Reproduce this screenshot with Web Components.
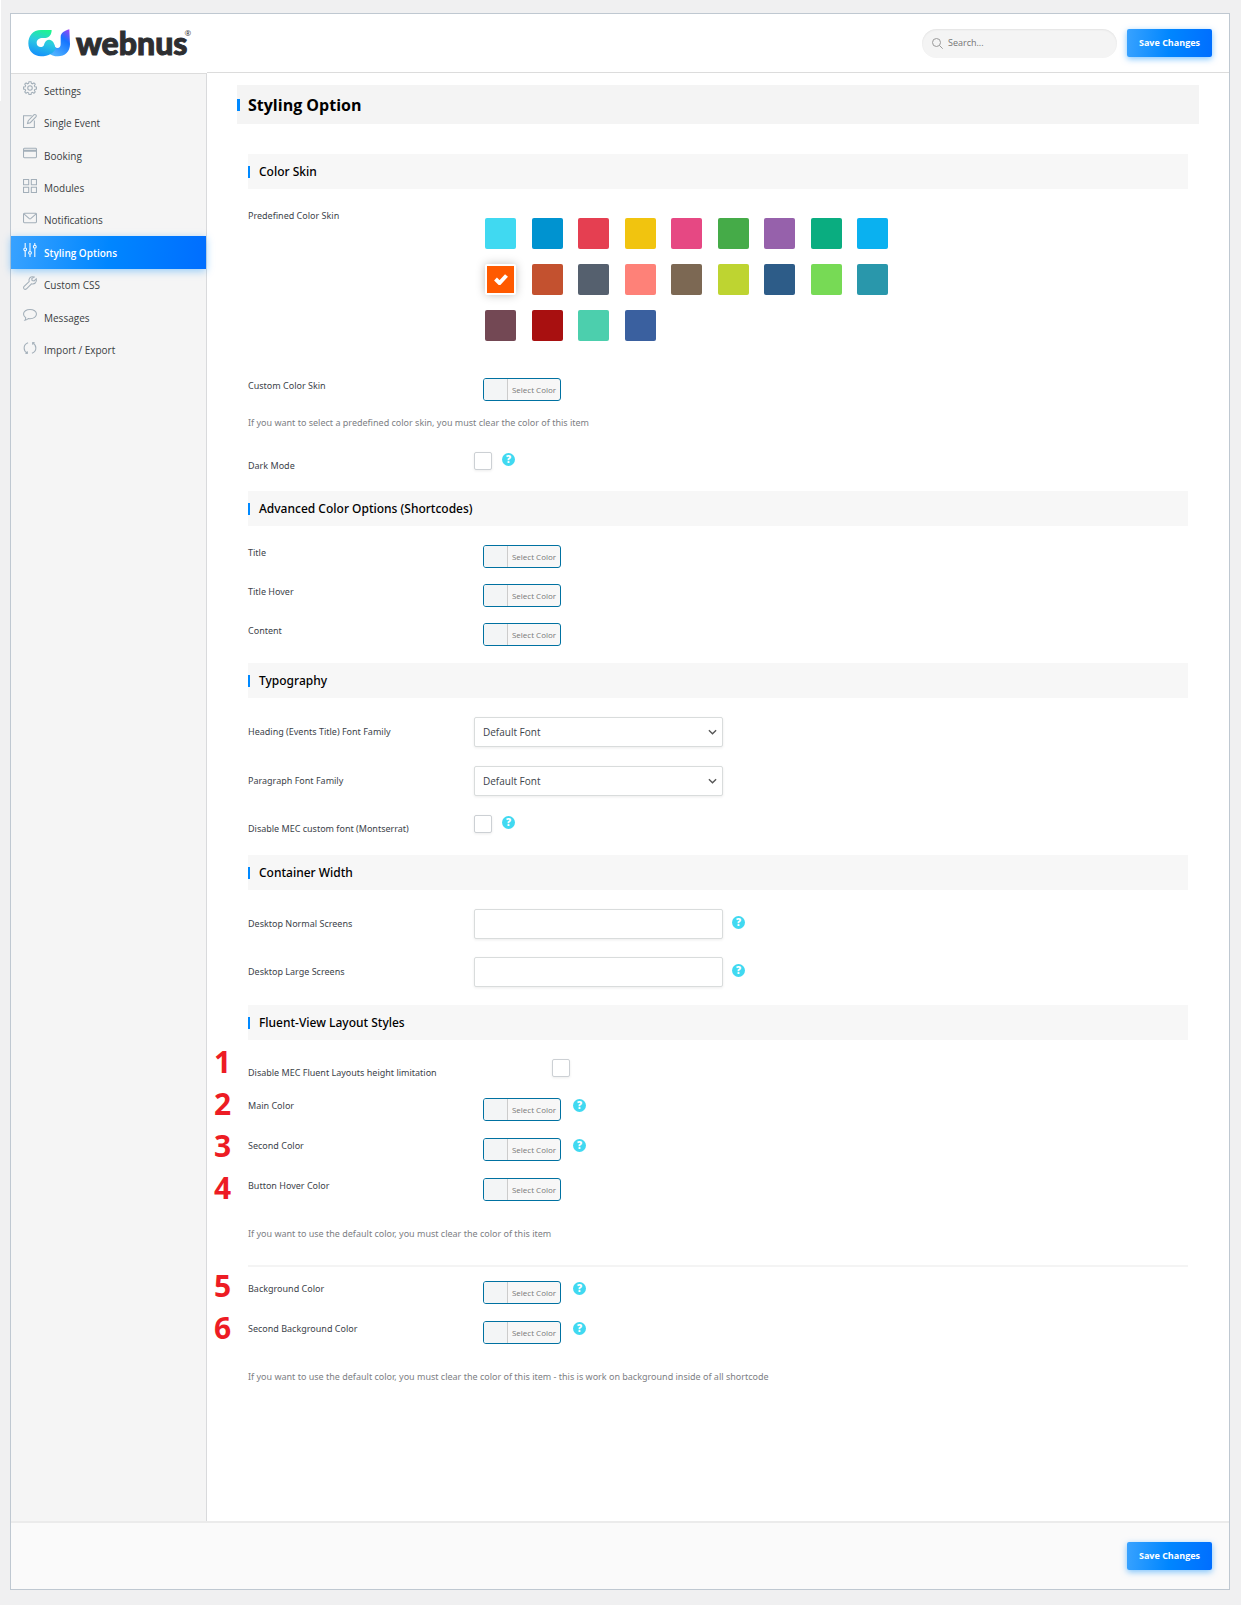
<!DOCTYPE html>
<html lang="en">
<head>
<meta charset="utf-8">
<meta name="viewport" content="width=device-width, initial-scale=1">
<title>Styling Option</title>
<style>
  body {
    margin: 0;
    color: #3c434a;
    background: #f0f0f1 linear-gradient(#fff, #fff) 0 0 / 1px 101px no-repeat;
    font-family: "Noto Sans", "Open Sans", sans-serif;
    font-size: 9px;
    line-height: 16px;
  }
</style>
</head>
<body>
<settings-page></settings-page>

<script>
const ICONS = {
  settings: `<circle cx="8" cy="8" r="2.6"/><path d="M6.8 .8h2.4l.4 1.9 1.3.5L12.500 2.100l1.500 1.500-1 1.700.5 1.200 1.900.4v2.300l-1.900.4-.5 1.300 1 1.600-1.500 1.500-1.600-1-1.300.5-.4 1.900H6.800l-.4-1.900-1.300-.5-1.600 1L2 12.500l1-1.600-.5-1.300-1.900-.4V6.900l1.900-.4.5-1.200-1-1.700 1.500-1.500 1.600 1.100 1.300-.5z"/>`,
  edit: `<path d="M10 2H.6v13.400H13V7.500"/><path d="M5.200 10.800l.8-3.200L12.700.8q1-.7 2 .3t.3 2L8.300 9.900zM5.200 10.800l2-.6"/>`,
  card: `<rect x=".6" y="2.600" width="14.800" height="10.800" rx="1"/><path d="M.6 4.800h14.800M.6 6h14.800"/>`,
  modules: `<path d="M.6.6h5.900v5.900H.6zM9.500.6h5.900v5.900H9.500zM.6 9.500h5.900v5.900H.6zM9.500 9.500h5.900v5.900H9.500z"/>`,
  mail: `<rect x=".6" y="2.600" width="14.800" height="10.800" rx="1"/><path d="M1 3.200l6.200 5.600q.8.600 1.600 0L15 3.200"/>`,
  sliders: `<path d="M2.500 0v5.500M2.500 9v7M8 0v9.500M8 13v3M13.500 0v2.500M13.500 6v10"/><circle cx="2.500" cy="7.200" r="1.600"/><circle cx="8" cy="11.200" r="1.600"/><circle cx="13.500" cy="4.200" r="1.600"/>`,
  wrench: `<path d="M12.800 1.200q-3-1.200-5 .9-1.500 1.700-.8 4.200L1 12.200q-.9 1.200.2 2.500 1.200 1.100 2.500.2l6-6q2.600.7 4.300-.9 2-2 1.200-4.800l-2.500 2.400-2.300-.5-.4-2.100z"/>`,
  bubble: `<path d="M8 1.600c4.200 0 7.400 2.300 7.400 5.300S12.200 12.200 8 12.200q-1 0-2-.2-1.400 1.800-3.800 2 1-1.200.9-2.900C1.500 10.200.6 8.600.6 6.900c0-3 3.200-5.300 7.400-5.300z"/>`,
  sync: `<path d="M5.800 2C3 3 1.300 5.300 1.300 8c0 2.400 1.300 4.500 3.400 5.800M10.200 14c2.800-1 4.500-3.300 4.500-6 0-2.400-1.300-4.500-3.400-5.800M2.800 14.200l2.300-.2-.3-2.300M13.200 1.800l-2.300.2.300 2.300"/>`
};

class WebnusLogo extends HTMLElement {
  connectedCallback() {
    this.attachShadow({ mode: "open" });
    this.shadowRoot.innerHTML = `
      <style>
        :host { display: flex; align-items: center; gap: 6px; color: #2d2e31; }
        svg { width: 42px; height: 28px; }
        .name { font: 900 32px/40px Lato, sans-serif; -webkit-text-stroke: 1px currentColor; }
        sup { font: 400 8px/8px "Open Sans", sans-serif; align-self: flex-start; margin: 6px 0 0 -9px; }
      </style>
      <svg viewBox="82 90 126 82" aria-hidden="true">
        <defs>
          <linearGradient id="loop" x1=".7" y1="0" x2=".4" y2="1">
            <stop offset="0" stop-color="#1ef78c"/><stop offset=".45" stop-color="#2ccbe0"/><stop offset="1" stop-color="#1590fb"/>
          </linearGradient>
          <linearGradient id="hook" x1="1" y1="0" x2=".4" y2="1">
            <stop offset="0" stop-color="#a63ff5"/><stop offset=".4" stop-color="#1474ff"/><stop offset="1" stop-color="#4db0ff"/>
          </linearGradient>
        </defs>
        <path fill="url(#hook)" d="M206 90C192 94 180 100 180 114v20c0 8-4 12-9 12-7 0-9-5-11-13l-16 28c7 7 16 10 28 10 21 0 36-14 36-36z"/>
        <path fill="url(#loop)" d="M153 92h-32C96 92 83 110 83 132c0 24 17 39 38 39 22 0 41-11 44-25-4-6-4-12-7-17-5-9-15-10-21-5-9 8-4 14-12 18-8 3-17-2-17-11 0-10 8-15 18-15h8c12 0 19-11 19-24z"/>
      </svg>
      <span class="name">webnus</span><sup>®</sup>
    `;
  }
}

class SaveButton extends HTMLElement {
  connectedCallback() {
    this.attachShadow({ mode: "open" });
    this.shadowRoot.innerHTML = `
      <style>
        :host { display: block; }
        button {
          display: block;
          min-width: 85px;
          height: 28px;
          padding: 0 8px;
          border: 0;
          border-radius: 2px;
          color: #fff;
          background: linear-gradient(95deg, #38a2ff 0%, #0086ff 50%, #006eff 100%);
          box-shadow: 0 2px 6px rgba(0, 142, 255, 0.5);
          font: 700 9px/16px "Open Sans", sans-serif;
          white-space: nowrap;
          cursor: pointer;
        }
      </style>
      <button type="button"><slot></slot></button>
    `;
  }
}

class SearchBox extends HTMLElement {
  connectedCallback() {
    this.attachShadow({ mode: "open" });
    this.shadowRoot.innerHTML = `
      <style>
        :host {
          display: flex;
          align-items: center;
          gap: 5px;
          box-sizing: border-box;
          width: 195px;
          height: 29px;
          padding: 0 10px;
          border-radius: 15px;
          background: #f4f4f4;
          box-shadow: inset 0 1px 2px rgba(0, 0, 0, 0.07);
        }
        svg { flex: none; width: 11px; height: 11px; fill: none; stroke: #9a9a9a; }
        input {
          flex: 1;
          min-width: 0;
          padding: 0;
          border: 0;
          outline: 0;
          background: none;
          color: #444;
          font: 400 9px/16px "Open Sans", sans-serif;
        }
        input::placeholder { color: #757575; }
      </style>
      <svg viewBox="0 0 11 11" aria-hidden="true"><circle cx="4.500" cy="4.500" r="4"/><path d="M7.500 7.500l3.200 3.200"/></svg>
      <input type="search" placeholder="Search..." aria-label="Search">
    `;
  }
}

class NavItem extends HTMLElement {
  connectedCallback() {
    this.attachShadow({ mode: "open" });
    this.shadowRoot.innerHTML = `
      <style>
        :host { display: grid; }
        a {
          display: flex;
          align-items: center;
          gap: 7px;
          padding: 0 12px;
          color: #3a3d42;
          font-family: "Open Sans", sans-serif;
          font-size: 10px;
          font-weight: 500;
          text-decoration: none;
        }
        svg { flex: none; width: 14px; height: 14px; margin-bottom: 4px; fill: none; stroke: #a3afb9; stroke-width: 1.200; overflow: visible; }
        span { padding-top: 1px; }
        :host([active]) a {
          color: #fff;
          font-weight: 600;
          background: linear-gradient(95deg, #38a2ff 0%, #0086ff 50%, #006eff 100%);
          box-shadow: 0 2px 8px rgba(0, 142, 255, 0.4);
        }
        :host([active]) svg { stroke: #fff; }
      </style>
      <a href="#"><svg viewBox="0 0 16 16" aria-hidden="true">${ICONS[this.getAttribute("icon")]}</svg><span><slot></slot></span></a>
    `;
  }
}

class HelpTip extends HTMLElement {
  connectedCallback() {
    this.attachShadow({ mode: "open" });
    this.shadowRoot.innerHTML = `
      <style>
        :host { display: block; }
        button {
          display: block;
          width: 13px;
          height: 13px;
          padding: 0;
          border: 0;
          border-radius: 50%;
          color: #fff;
          background: #40d9f1;
          font: 800 10px/13px "Open Sans", sans-serif;
          text-align: center;
        }
      </style>
      <button type="button">?</button>
    `;
  }
}

// One titled block of settings; the rows are slotted in.
class OptionSection extends HTMLElement {
  connectedCallback() {
    this.attachShadow({ mode: "open" });
    this.shadowRoot.innerHTML = `
      <style>
        :host { display: block; position: relative; }
        h2 {
          display: flex;
          align-items: center;
          gap: 9px;
          height: 35px;
          margin: 0;
          color: #000;
          background: #f7f7f7;
          font-size: 12px;
          font-weight: 500;
        }
        h2::before { content: ""; width: 2px; height: 12px; background: #0089ff; }
        .body {
          display: flex;
          flex-direction: column;
          gap: var(--row-gap, 16px);
          padding: 19px 0 var(--section-end, 17px);
        }
      </style>
      <h2>${this.getAttribute("heading")}</h2>
      <div class="body"><slot></slot></div>
    `;
  }
}

// Label column plus a control: color, check, select or text.
class OptionRow extends HTMLElement {
  connectedCallback() {
    const controls = {
      color: `<button id="control" type="button" class="picker"><i></i><span>Select Color</span></button>`,
      check: `<input id="control" type="checkbox">`,
      select: `<select id="control"><option>Default Font</option></select>`,
      text: `<input id="control" type="text">`
    };
    this.attachShadow({ mode: "open" });
    this.shadowRoot.innerHTML = `
      <style>
        :host { display: flex; align-items: flex-start; }
        * { box-sizing: border-box; }
        label { flex: none; width: 226px; white-space: nowrap; }
        input, select {
          display: block;
          margin: 0;
          border: 1px solid #d9dcdc;
          border-radius: 2px;
          background: #fff;
          box-shadow: 0 1px 3px rgba(0, 0, 0, 0.08);
        }
        select, input[type="text"] {
          width: 249px;
          height: 30px;
          padding: 0 8px;
          color: #3c434a;
          font: 400 10px/16px "Open Sans", sans-serif;
        }
        select {
          appearance: none;
          background: #fff url('data:image/svg+xml,<svg xmlns="http://www.w3.org/2000/svg" viewBox="0 0 10 6"><path d="M1 1l4 4 4-4" fill="none" stroke="%23555" stroke-width="1.500"/></svg>') no-repeat right 5px center / 9px 6px;
        }
        input[type="checkbox"] { appearance: none; width: 18px; height: 18px; border-color: #ccd0d4; }
        .picker {
          display: flex;
          width: 78px;
          height: 23px;
          margin-left: 9px;
          padding: 0;
          border: 1px solid #0071a1;
          border-radius: 3px;
          overflow: hidden;
          color: #777;
          background: #f7f7f7;
          font: 400 8px/22px "Open Sans", sans-serif;
        }
        .picker i { width: 24px; height: 21px; border-right: 1px solid #ccc; background: #f3f5f6; }
        .picker span { flex: 1; text-align: center; }
        help-tip { margin: 1px 0 0 12px; }
        :host([type="check"]) label { padding-top: 6px; }
        :host([type="check"]) help-tip { margin-left: 10px; }
        :host([type="select"]) label, :host([type="text"]) label { padding-top: 7px; }
        :host([type="text"]) help-tip { margin: 7px 0 0 9px; }
        :host([wide]) label { width: 304px; }
      </style>
      <label for="control">${this.getAttribute("label")}</label>
      ${controls[this.getAttribute("type")]}
      ${this.hasAttribute("help") ? "<help-tip></help-tip>" : ""}
    `;
  }
}

class ColorSkins extends HTMLElement {
  connectedCallback() {
    const skins = [
      "#40d9f1", "#0093d0", "#e53f51", "#f1c40f", "#e64883", "#45ab48", "#9661ab", "#0aad80", "#0ab1f0",
      "#ff5a00", "#c3512f", "#55606e", "#fe8178", "#7c6853", "#bed431", "#2d5c88", "#77da55", "#2997ab",
      "#734854", "#a81010", "#4ccfad", "#3a609f"
    ];
    this.attachShadow({ mode: "open" });
    this.shadowRoot.innerHTML = `
      <style>
        :host { display: block; }
        fieldset { display: flex; margin: 0; padding: 0; border: 0; }
        .label { flex: none; width: 237px; }
        .skins {
          display: grid;
          grid-template-columns: repeat(9, 31px);
          justify-content: space-between;
          row-gap: 15px;
          width: 403px;
          padding-top: 10px;
        }
        label { position: relative; display: grid; place-items: center; }
        input {
          appearance: none;
          width: 31px;
          height: 31px;
          margin: 0;
          border-radius: 2px;
          background: var(--skin);
        }
        input:checked { border: 2px solid #fff; box-shadow: 0 0 10px rgba(0, 0, 0, 0.25); }
        svg { position: absolute; width: 14px; height: 11px; fill: none; stroke: #fff; stroke-width: 4; }
      </style>
      <fieldset aria-labelledby="title">
        <span class="label" id="title">Predefined Color Skin</span>
        <div class="skins">
          ${skins.map((skin) => `
            <label style="--skin: ${skin}">
              <input type="radio" name="skin" aria-label="${skin}" ${skin === "#ff5a00" ? "checked" : ""}>
              ${skin === "#ff5a00" ? `<svg viewBox="0 0 14 11"><path d="M1.500 5l4 4 7-7.500"/></svg>` : ""}
            </label>`).join("")}
        </div>
      </fieldset>
    `;
  }
}

class OptionNote extends HTMLElement {
  connectedCallback() {
    this.attachShadow({ mode: "open" });
    this.shadowRoot.innerHTML = `
      <style>
        :host { display: block; color: #7d8084; }
        p { margin: 0; }
      </style>
      <p><slot></slot></p>
    `;
  }
}

// Red call-out numbers lying over the gutter beside the fluent rows.
class CalloutNumbers extends HTMLElement {
  connectedCallback() {
    this.attachShadow({ mode: "open" });
    this.shadowRoot.innerHTML = `
      <style>
        :host {
          position: absolute;
          top: 36px;
          left: -34px;
          color: #ed1c24;
          font: 700 30px/42px "Open Sans", sans-serif;
        }
        div + div { margin-top: 56px; }
        span { display: block; }
      </style>
      <div><span>1</span><span>2</span><span>3</span><span>4</span></div>
      <div><span>5</span><span>6</span></div>
    `;
  }
}

class SettingsPage extends HTMLElement {
  connectedCallback() {
    this.attachShadow({ mode: "open" });
    this.shadowRoot.innerHTML = `
      <style>
        :host {
          display: flex;
          box-sizing: border-box;
          min-height: 100vh;
          padding: 13px 11px 15px 10px;
        }
        .panel {
          flex: 1;
          display: flex;
          flex-direction: column;
          border: 1px solid #bfc8d1;
          background: #fff;
        }
        header { display: flex; align-items: center; gap: 10px; height: 58px; padding: 0 17px; }
        webnus-logo { margin-right: auto; }
        .content { flex: 1; display: flex; }
        nav {
          flex: none;
          width: 195px;
          margin-top: 1px;
          border-top: 1px solid #dcdcdc;
          border-right: 1px solid #d9dadc;
          background: #f5f5f5;
        }
        .items { display: grid; grid-template-rows: repeat(9, 1fr); height: 292px; }
        main { flex: 1; min-width: 0; padding: 12px 30px 0; border-top: 1px solid #dcdcdc; }
        h1 {
          display: flex;
          align-items: center;
          gap: 8px;
          height: 39px;
          margin: 0 0 30px;
          color: #000;
          background: #f4f4f4;
          font-family: "Open Sans", sans-serif;
          font-size: 16px;
          line-height: 24px;
          font-weight: 700;
        }
        h1::before { content: ""; width: 3px; height: 12px; background: #0089ff; }
        .sections { padding: 0 11px; }
        .skin { --row-gap: 19px; --section-end: 17px; }
        .skin color-skins { margin-bottom: 18px; }
        .skin option-note { margin: -5px 0 2px; }
        .typography { --row-gap: 19px; --section-end: 18px; }
        .container { --row-gap: 18px; --section-end: 18px; }
        .fluent { --row-gap: 17px; }
        .fluent option-note { margin: 8px 0 6px; }
        hr { width: 100%; height: 2px; margin: 0 0 -3px; border: 0; background: #f4f4f4; }
        footer {
          display: flex;
          align-items: center;
          justify-content: flex-end;
          height: 66px;
          padding: 0 17px;
          border-top: 2px solid #ebebeb;
          background: #fafafa;
        }
      </style>
      <div class="panel">
        <header>
          <webnus-logo></webnus-logo>
          <search-box></search-box>
          <save-button>Save Changes</save-button>
        </header>
        <div class="content">
          <nav>
            <div class="items">
              <nav-item icon="settings">Settings</nav-item>
              <nav-item icon="edit">Single Event</nav-item>
              <nav-item icon="card">Booking</nav-item>
              <nav-item icon="modules">Modules</nav-item>
              <nav-item icon="mail">Notifications</nav-item>
              <nav-item icon="sliders" active>Styling Options</nav-item>
              <nav-item icon="wrench">Custom CSS</nav-item>
              <nav-item icon="bubble">Messages</nav-item>
              <nav-item icon="sync">Import / Export</nav-item>
            </div>
          </nav>
          <main>
            <h1>Styling Option</h1>
            <div class="sections">
              <option-section class="skin" heading="Color Skin">
                <color-skins></color-skins>
                <option-row type="color" label="Custom Color Skin"></option-row>
                <option-note>If you want to select a predefined color skin, you must clear the color of this item</option-note>
                <option-row type="check" label="Dark Mode" help></option-row>
              </option-section>
              <option-section heading="Advanced Color Options (Shortcodes)">
                <option-row type="color" label="Title"></option-row>
                <option-row type="color" label="Title Hover"></option-row>
                <option-row type="color" label="Content"></option-row>
              </option-section>
              <option-section class="typography" heading="Typography">
                <option-row type="select" label="Heading (Events Title) Font Family"></option-row>
                <option-row type="select" label="Paragraph Font Family"></option-row>
                <option-row type="check" label="Disable MEC custom font (Montserrat)" help></option-row>
              </option-section>
              <option-section class="container" heading="Container Width">
                <option-row type="text" label="Desktop Normal Screens" help></option-row>
                <option-row type="text" label="Desktop Large Screens" help></option-row>
              </option-section>
              <option-section class="fluent" heading="Fluent-View Layout Styles">
                <option-row type="check" label="Disable MEC Fluent Layouts height limitation" wide></option-row>
                <option-row type="color" label="Main Color" help></option-row>
                <option-row type="color" label="Second Color" help></option-row>
                <option-row type="color" label="Button Hover Color"></option-row>
                <option-note>If you want to use the default color, you must clear the color of this item</option-note>
                <hr>
                <option-row type="color" label="Background Color" help></option-row>
                <option-row type="color" label="Second Background Color" help></option-row>
                <option-note>If you want to use the default color, you must clear the color of this item - this is work on background inside of all shortcode</option-note>
                <callout-numbers></callout-numbers>
              </option-section>
            </div>
          </main>
        </div>
        <footer><save-button>Save Changes</save-button></footer>
      </div>
    `;
  }
}

customElements.define("webnus-logo", WebnusLogo);
customElements.define("save-button", SaveButton);
customElements.define("search-box", SearchBox);
customElements.define("nav-item", NavItem);
customElements.define("help-tip", HelpTip);
customElements.define("option-section", OptionSection);
customElements.define("option-row", OptionRow);
customElements.define("color-skins", ColorSkins);
customElements.define("option-note", OptionNote);
customElements.define("callout-numbers", CalloutNumbers);
customElements.define("settings-page", SettingsPage);
</script>
</body>
</html>
